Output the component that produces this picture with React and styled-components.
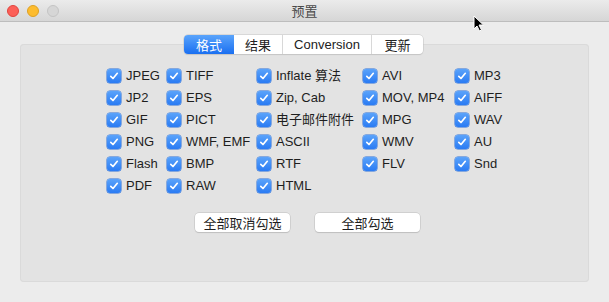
import React from "react";
import styled, { createGlobalStyle } from "styled-components";

const Global = createGlobalStyle`
  html, body { margin: 0; padding: 0; background: #ececec; }
  body { font-family: "Liberation Sans", "Noto Sans CJK SC", sans-serif; }
`;

const Window = styled.div`
  position: relative;
  width: 609px;
  height: 302px;
  background: #ececec;
  display: flex;
  flex-direction: column;
  overflow: hidden;
`;

const TitleBar = styled.div`
  height: 22px;
  flex: none;
  box-sizing: border-box;
  background: linear-gradient(#ebebeb, #d6d6d6);
  border-bottom: 1px solid #bdbdbd;
  display: flex;
  align-items: center;
  position: relative;
  padding-left: 7px;
  gap: 8px;
`;

const Light = styled.span`
  width: 12px;
  height: 12px;
  border-radius: 50%;
  box-sizing: border-box;
  background: ${(p) => p.$c};
  border: 0.5px solid ${(p) => p.$b};
`;

const Title = styled.div`
  position: absolute;
  left: 0;
  right: 0;
  top: 0;
  height: 21px;
  line-height: 21px;
  text-align: center;
  font-family: "Noto Sans CJK SC", sans-serif;
  font-size: 13px;
  color: #4a4a4a;
  pointer-events: none;
`;

const Body = styled.div`
  flex: 1;
  display: flex;
  flex-direction: column;
  padding: 13px 20px 20px 20px;
`;

const TabBar = styled.div`
  align-self: center;
  display: flex;
  height: 19px;
  margin-left: -2px;
  border-radius: 4px;
  background: #fff;
  box-shadow: 0 0 0 0.5px #c4c4c4, 0 1px 1px rgba(0,0,0,0.12);
  position: relative;
  z-index: 1;
`;

const Tab = styled.div`
  width: ${(p) => p.$w}px;
  box-sizing: border-box;
  display: flex;
  align-items: center;
  justify-content: center;
  font-size: 13px;
  color: ${(p) => (p.$active ? "#fff" : "#222")};
  background: ${(p) => (p.$active ? "linear-gradient(#5aa4fb, #1a6ff1)" : "transparent")};
  border-radius: ${(p) => (p.$first ? "4px 0 0 4px" : p.$last ? "0 4px 4px 0" : "0")};
  border-left: ${(p) => (p.$first || p.$afterActive ? "none" : "1px solid #d8d8d8")};
`;

const Panel = styled.div`
  flex: 1;
  margin-top: -10px;
  background: #e3e3e3;
  border-radius: 4px;
  box-shadow: inset 0 0 0 1px #dadada;
  padding: 25px 0 0 87px;
  display: flex;
  flex-direction: column;
`;

const Grid = styled.div`
  display: grid;
  grid-auto-flow: column;
  grid-template-rows: repeat(6, 22px);
  grid-template-columns: 60px 90px 106px 92px auto;
`;

const Item = styled.label`
  display: flex;
  align-items: flex-start;
  gap: 4px;
  font-size: 13px;
  color: #1e1e1e;
  line-height: 14px;
  white-space: nowrap;
`;

const Box = styled.span`
  width: 14px;
  height: 14px;
  flex: none;
  box-sizing: border-box;
  border-radius: 3px;
  background: linear-gradient(#5ba3fa, #2a7bf3);
  box-shadow: 0 0 0 0.5px #2a6fd8;
  display: flex;
  align-items: center;
  justify-content: center;
`;

const Label = styled.span`
  padding-left: 1px;
`;

const Buttons = styled.div`
  display: flex;
  gap: 25px;
  margin-top: 12px;
  margin-left: -81px;
  justify-content: center;
`;

const Button = styled.div`
  width: ${(p) => p.$w}px;
  height: 19px;
  box-sizing: border-box;
  background: #fff;
  border-radius: 4px;
  box-shadow: 0 0 0 0.5px #bdbdbd, 0 1px 1px rgba(0,0,0,0.15);
  display: flex;
  align-items: center;
  justify-content: center;
  font-family: "Noto Sans CJK SC", sans-serif;
  font-size: 13px;
  color: #1e1e1e;
`;

const Cursor = styled.svg`
  position: absolute;
  left: 473px;
  top: 15px;
`;

const Check = () => (
  <svg width="10" height="10" viewBox="0 0 10 10">
    <path d="M1.8 5.3 L4 7.5 L8.3 2.3" fill="none" stroke="#fff" strokeWidth="1.7" strokeLinecap="round" strokeLinejoin="round" />
  </svg>
);

const items = [
  "JPEG", "JP2", "GIF", "PNG", "Flash", "PDF",
  "TIFF", "EPS", "PICT", "WMF, EMF", "BMP", "RAW",
  "Inflate 算法", "Zip, Cab", "电子邮件附件", "ASCII", "RTF", "HTML",
  "AVI", "MOV, MP4", "MPG", "WMV", "FLV", null,
  "MP3", "AIFF", "WAV", "AU", "Snd", null,
];

const tabs = [
  { t: "格式", w: 50 },
  { t: "结果", w: 48 },
  { t: "Conversion", w: 89 },
  { t: "更新", w: 52 },
];

export default function App() {
  return (
    <>
      <Global />
      <Window>
        <TitleBar>
          <Light $c="#fc5f57" $b="#e0443e" />
          <Light $c="#fdbc2e" $b="#dea123" />
          <Light $c="#d6d6d6" $b="#c4c4c4" />
          <Title>预置</Title>
        </TitleBar>
        <Body>
          <TabBar>
            {tabs.map((tb, i) => (
              <Tab
                key={tb.t}
                $w={tb.w}
                $active={i === 0}
                $first={i === 0}
                $last={i === tabs.length - 1}
                $afterActive={i === 1}
              >
                {tb.t}
              </Tab>
            ))}
          </TabBar>
          <Panel>
            <Grid>
              {items.map((it, i) =>
                it ? (
                  <Item key={i}>
                    <Box><Check /></Box>
                    <Label>{it}</Label>
                  </Item>
                ) : (
                  <span key={i} />
                )
              )}
            </Grid>
            <Buttons>
              <Button $w={95}>全部取消勾选</Button>
              <Button $w={105}>全部勾选</Button>
            </Buttons>
          </Panel>
        </Body>
        <Cursor width="12" height="17" viewBox="0 0 12 17">
          <path d="M1 1 L1 14 L4 11 L6.5 16 L8.5 15 L6 10 L10.5 10 Z" fill="#000" stroke="#fff" strokeWidth="1" strokeLinejoin="round" />
        </Cursor>
      </Window>
    </>
  );
}
